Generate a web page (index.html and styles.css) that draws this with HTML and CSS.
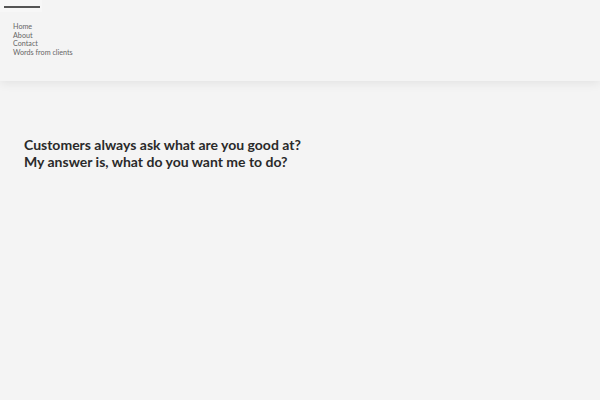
FILE: index.html
```html
<!DOCTYPE html>
<html lang="en">
<head>
    <meta charset="UTF-8">
    <meta name="viewport" content="width=device-width, initial-scale=1.0">
    <title>Home</title>
    <link rel="stylesheet" href="styles.css">
</head>
<body>
    <header class="site-header">
        <div class="menu-toggle"><span class="menu-bar"></span></div>
        <nav class="main-nav">
            <a href="#">Home</a>
            <a href="#">About</a>
            <a href="#">Contact</a>
            <a href="#">Words from clients</a>
        </nav>
    </header>

    <section class="intro">
        <h1>Customers always ask what are you good at?<br>My answer is, what do you want me to do?</h1>
    </section>
</body>
</html>
```

FILE: styles.css
```css
body {
    margin: 0;
    background: #f4f4f4;
    font-family: "Lato", "Open Sans", sans-serif;
    color: #222;
}

.site-header {
    height: 81px;
    background: #f4f4f4;
    box-shadow: 0 2px 10px rgba(0,0,0,0.08);
}

.menu-toggle {
    width: 42px;
    height: 12px;
    padding-left: 4px;
    padding-top: 6px;
    box-sizing: border-box;
    background: #f7f7f7;
}

.menu-bar {
    display: block;
    width: 36px;
    height: 2px;
    background: #555;
}

.main-nav {
    display: flex;
    flex-direction: column;
    padding: 11px 0 0 13px;
}

.main-nav a {
    font-size: 7.2px;
    line-height: 8.7px;
    color: #666;
    text-decoration: none;
}

.intro {
    padding: 55px 24px 0;
}

.intro h1 {
    margin: 0;
    font-size: 14px;
    line-height: 17px;
    font-weight: 700;
    color: #2a2a2a;
}
```
